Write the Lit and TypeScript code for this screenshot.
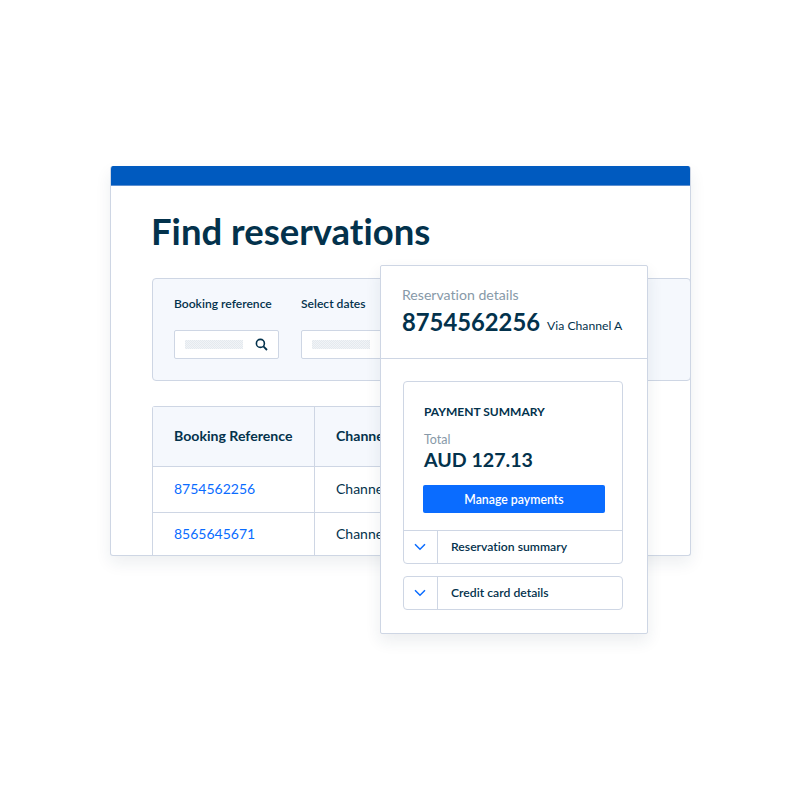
import { LitElement, html, css } from "lit";
import { customElement } from "lit/decorators.js";

const chevron = html`<svg class="chev" width="12" height="8" viewBox="0 0 12 8" fill="none"><path d="M1 1.2 6 6.2 11 1.2" stroke="#0a6cff" stroke-width="1.5"/></svg>`;

@customElement("app-root")
export class AppRoot extends LitElement {
  static styles = css`
    :host { display: block; width: 800px; height: 800px; background: #fff; font-family: Lato, sans-serif; color: #03324c; overflow: hidden; font-variant-ligatures: none; }
    * { box-sizing: border-box; }
    .stage { position: relative; padding: 166px 0 0 110px; height: 800px; }
    .window { width: 581px; height: 390px; background: #fff; border: 1px solid #ced6e4; border-top: 0; border-radius: 3px; overflow: hidden; box-shadow: 0 7px 16px rgba(30, 50, 80, 0.08); }
    .bar { height: 20px; margin: 0 -1px; background: #005abf; border-bottom: 1px solid #5d8fd0; }
    .main { padding: 23px 0 0 41px; }
    h1 { margin: 0 0 0 -1px; font-size: 36.5px; line-height: 44px; font-weight: 700; }
    .filter { margin: 25px -1px 0 0; height: 103px; background: #f5f8fd; border: 1px solid #ced6e4; border-radius: 4px; padding: 17px 21px; display: flex; gap: 22px; }
    .field { display: flex; flex-direction: column; gap: 16px; }
    .field label { font-size: 12.1px; line-height: 16px; font-weight: 600; height: 18px; }
    .input { width: 105px; height: 29px; background: #fff; border: 1px solid #ced6e4; border-radius: 2px; display: flex; align-items: center; justify-content: space-between; padding: 0 10px 0 10px; }
    .ph { width: 58px; height: 9px; background: repeating-conic-gradient(#e4e9ee 0 25%, #f1f4f7 0 50%) 0 0 / 2px 2px; }
    .table { margin-top: 25px; width: 420px; border: 1px solid #ced6e4; border-bottom: 0; border-radius: 3px 0 0 0; display: grid; grid-template-columns: 161px 1fr; grid-template-rows: 60px 46px 42px; font-size: 14px; }
    .cell { display: flex; align-items: center; padding: 0 0 2px 21px; border-bottom: 1px solid #ced6e4; white-space: nowrap; overflow: hidden; }
    .cell.c2 { border-left: 1px solid #ced6e4; }
    .head { background: #f5f8fd; font-weight: 700; font-size: 14.1px; }
    .link { color: #0a6cff; }
    .last { border-bottom: 0; }
    .popup { position: absolute; left: 380px; top: 265px; width: 268px; height: 369px; background: #fff; border: 1px solid #ced6e4; border-radius: 2px; box-shadow: 0 7px 16px rgba(30, 50, 80, 0.09); }
    .ph-head { height: 93px; padding: 20px 21px 0; border-bottom: 1px solid #ced6e4; }
    .sub { font-size: 14.1px; line-height: 18px; color: #8799a8; }
    .idline { display: flex; align-items: baseline; gap: 7px; margin-top: 3px; }
    .id { font-size: 23.8px; line-height: 30px; font-weight: 700; }
    .via { font-size: 12.2px; position: relative; top: -1px; }
    .ph-body { padding: 22px 24px 0 22px; display: flex; flex-direction: column; gap: 12px; }
    .card { border: 1px solid #ced6e4; border-radius: 4px; }
    .summary { padding: 22px 17px 16px 19px; height: 149px; border-bottom: 1px solid #ced6e4; }
    .caps { font-size: 12px; line-height: 16px; font-weight: 700; margin-left: 1px; }
    .total { font-size: 12.5px; line-height: 16px; color: #8799a8; margin: 12px 0 0 1px; }
    .amount { font-size: 19.6px; line-height: 26px; font-weight: 700; margin: -1px 0 0 1px; }
    .btn { margin-top: 12px; height: 28px; background: #0a6cff; color: #fff; border-radius: 2px; display: flex; align-items: center; justify-content: center; font-size: 12.3px; font-weight: 600; }
    .row { height: 32px; display: flex; align-items: stretch; font-size: 12.2px; font-weight: 600; }
    .row .ic { width: 34px; border-right: 1px solid #ced6e4; display: flex; align-items: center; justify-content: center; padding-right: 2px; }
    .row .tx { display: flex; align-items: center; padding: 0 0 2px 13px; }
    .boxed { border: 1px solid #ced6e4; border-radius: 4px; height: 34px; }
  `;

  render() {
    return html`<div class="stage">
      <div class="window">
        <div class="bar"></div>
        <div class="main">
          <h1>Find reservations</h1>
          <div class="filter">
            <div class="field">
              <label>Booking reference</label>
              <div class="input"><span class="ph"></span>
                <svg width="13" height="13" viewBox="0 0 13 13" fill="none"><circle cx="5.4" cy="5.4" r="4" stroke="#03324c" stroke-width="1.6"/><path d="M8.4 8.4 12 12" stroke="#03324c" stroke-width="1.8"/></svg>
              </div>
            </div>
            <div class="field">
              <label>Select dates</label>
              <div class="input"><span class="ph"></span></div>
            </div>
          </div>
          <div class="table">
            <div class="cell head">Booking Reference</div>
            <div class="cell head c2">Channel</div>
            <div class="cell link">8754562256</div>
            <div class="cell c2">Channel A</div>
            <div class="cell link last">8565645671</div>
            <div class="cell c2 last">Channel B</div>
          </div>
        </div>
      </div>
      <div class="popup">
        <div class="ph-head">
          <div class="sub">Reservation details</div>
          <div class="idline"><span class="id">8754562256</span><span class="via">Via Channel A</span></div>
        </div>
        <div class="ph-body">
          <div class="card">
            <div class="summary">
              <div class="caps">PAYMENT SUMMARY</div>
              <div class="total">Total</div>
              <div class="amount">AUD 127.13</div>
              <div class="btn">Manage payments</div>
            </div>
            <div class="row"><div class="ic">${chevron}</div><div class="tx">Reservation summary</div></div>
          </div>
          <div class="row boxed"><div class="ic">${chevron}</div><div class="tx">Credit card details</div></div>
        </div>
      </div>
    </div>`;
  }
}
